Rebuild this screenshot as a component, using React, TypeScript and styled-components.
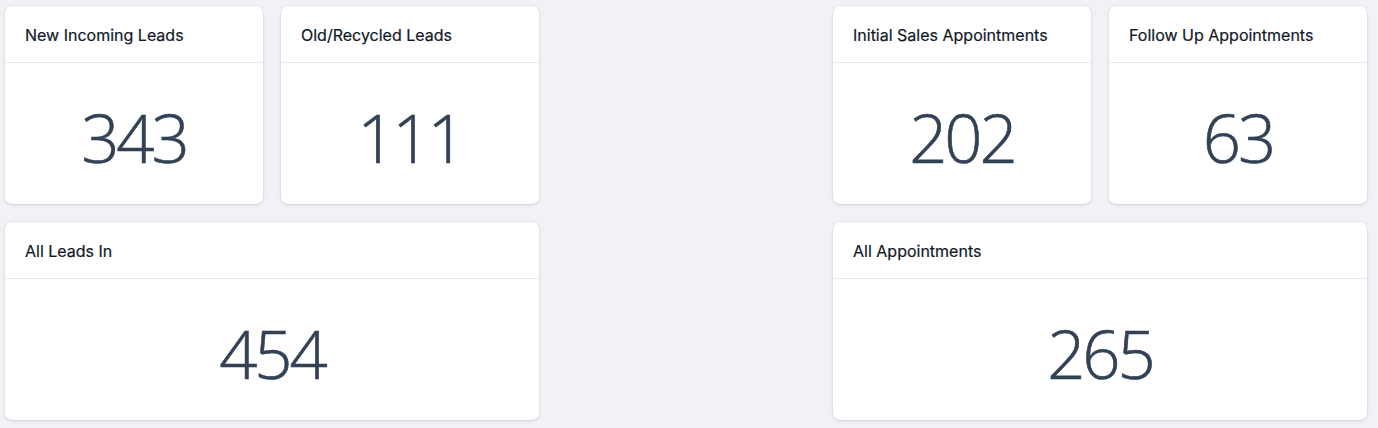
import React from "react";
import styled, { createGlobalStyle } from "styled-components";

const Global = createGlobalStyle`
  html, body { margin: 0; padding: 0; background: #f1f2f6; }
  body { font-family: Inter, "Noto Sans", sans-serif; }
`;

const Page = styled.div`
  display: grid;
  grid-template-columns: repeat(5, 258px);
  grid-auto-rows: 198px;
  gap: 18px;
  padding: 6px 11px 8px 5px;
`;

const Card = styled.div<{ $col: string }>`
  grid-column: ${(p) => p.$col};
  background: #ffffff;
  border-radius: 7px;
  box-shadow: 0 1px 3px rgba(15, 23, 42, 0.12), 0 0 0 1px rgba(15, 23, 42, 0.03);
  display: flex;
  flex-direction: column;
  overflow: hidden;
`;

const Header = styled.div`
  height: 57px;
  flex: none;
  display: flex;
  align-items: center;
  padding: 1px 20px 0;
  border-bottom: 1px solid #e7e9ee;
  font-family: Inter, sans-serif;
  font-size: 16px;
  font-weight: 400;
  color: #111827;
  box-sizing: border-box;
  -webkit-text-stroke: 0.2px #111827;
`;

const Body = styled.div`
  flex: 1;
  display: flex;
  align-items: center;
  justify-content: center;
  padding-top: 6px;
  font-family: "Open Sans", "Noto Sans", sans-serif;
  font-size: 67px;
  font-weight: 300;
  color: #334155;
  letter-spacing: -3px;
  -webkit-text-stroke: 0.6px #334155;
`;

const items = [
  { col: "1", title: "New Incoming Leads", value: "343" },
  { col: "2", title: "Old/Recycled Leads", value: "111" },
  { col: "4", title: "Initial Sales Appointments", value: "202" },
  { col: "5", title: "Follow Up Appointments", value: "63" },
  { col: "1 / span 2", title: "All Leads In", value: "454" },
  { col: "4 / span 2", title: "All Appointments", value: "265" },
];

export default function App() {
  return (
    <>
      <Global />
      <Page>
        {items.map((it) => (
          <Card key={it.title} $col={it.col}>
            <Header>{it.title}</Header>
            <Body>{it.value}</Body>
          </Card>
        ))}
      </Page>
    </>
  );
}
